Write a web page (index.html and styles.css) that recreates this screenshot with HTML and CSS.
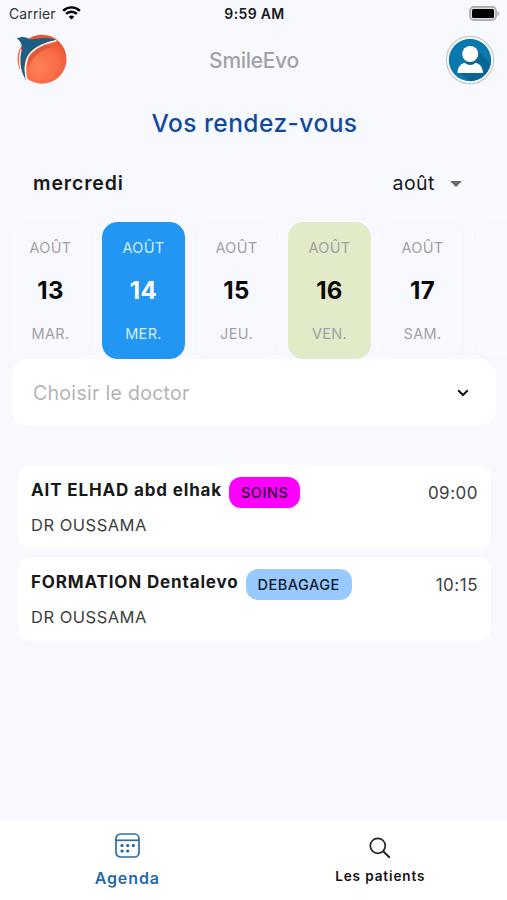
FILE: index.html
```html
<!DOCTYPE html>
<html lang="fr">
<head>
<meta charset="utf-8">
<title>SmileEvo</title>
<link rel="stylesheet" href="styles.css">
</head>
<body>
<div class="status">
  <div class="carrier"><span>Carrier</span>
    <svg width="19" height="14" viewBox="0 0 19 14"><path d="M9.5 13.6 6.7 10.8a4 4 0 0 1 5.6 0Z"/><path class="arc" d="M4.1 7.9a7.7 7.7 0 0 1 10.8 0M1.2 4.8a11.8 11.8 0 0 1 16.6 0"/></svg>
  </div>
  <div class="clock">9:59 AM</div>
  <svg class="battery" width="31" height="15" viewBox="0 0 31 15"><rect x=".9" y=".9" width="26.2" height="13.2" rx="4" fill="#ddd" stroke="#aaa" stroke-width="1.6"/><rect x="3" y="3" width="22" height="9" rx="1.5"/><path d="M28.5 5.2c2.2.7 2.2 3.9 0 4.6Z" fill="#aaa"/></svg>
</div>
<header class="header">
  <svg class="logo" width="52" height="52" viewBox="0 0 52 52">
    <defs><radialGradient id="ball" cx=".45" cy=".65" r=".65"><stop offset="0" stop-color="#ff8055"/><stop offset=".6" stop-color="#f96c45"/><stop offset="1" stop-color="#e9512f"/></radialGradient></defs>
    <circle cx="26" cy="25.200" r="24.500" fill="url(#ball)"/>
    <path d="M12 37C14 23 26 16 38 12L25 11 12 22Z" fill="#c94c35" opacity=".6"/>
    <path d="M10.500 47.500C2.500 35 3.500 23 6 14.500 6 9.500 4 6.500 .8 4.500 5 2.500 10 2.300 13.500 5.500 19 5.500 31 2 39.500 6 27 8.500 14.500 14.500 10.500 24 7.500 31 8.500 40 10.500 47.500Z" fill="#1d5f80"/>
    <path d="M40.500 6.700C27 9.300 15 15.500 11.300 24.500 8.500 31.500 9 40 11.300 48" fill="none" stroke="#fff" stroke-width="1.500"/>
    <path d="M5 15.500C2.700 24 3 36 9 46" fill="none" stroke="#fff" stroke-width="1.200"/>
  </svg>
  <div class="brand">SmileEvo</div>
  <svg class="avatar" width="50" height="50" viewBox="0 0 50 50">
    <circle cx="25" cy="25" r="23.600" fill="#fff" stroke="#c9c9cd" stroke-width="1.300"/>
    <circle cx="25" cy="25" r="21.200" fill="#0878ad"/>
    <path d="M31 14 45.500 29A21 21 0 0 1 25 46L14 37Z" fill="#0b6594"/>
    <circle cx="25.200" cy="19" r="8" fill="#fff"/><path d="M12.500 38c.3-6 2.600-9 7.500-10.300 2.800 3 7.600 3 10.400 0C35.300 29 37.700 32 38 38Z" fill="#fff"/>
  </svg>
</header>
<h1 class="title">Vos rendez-vous</h1>
<div class="month-row"><strong>mercredi</strong><div class="month"><span>août</span><svg width="12" height="6" viewBox="0 0 12 6"><path d="M0 0h12L6 6Z" fill="#686970"/></svg></div></div>
<div class="days">
  <div class="day"><span>AOÛT</span><b>13</b><span>MAR.</span></div>
  <div class="day selected"><span>AOÛT</span><b>14</b><span>MER.</span></div>
  <div class="day"><span>AOÛT</span><b>15</b><span>JEU.</span></div>
  <div class="day green"><span>AOÛT</span><b>16</b><span>VEN.</span></div>
  <div class="day"><span>AOÛT</span><b>17</b><span>SAM.</span></div>
  <div class="day"></div>
</div>
<div class="select"><span>Choisir le doctor</span><svg width="12" height="8" viewBox="0 0 12 8"><path d="M1.200 1.200 6 6l4.800-4.800" fill="none" stroke="#151515" stroke-width="2"/></svg></div>
<main class="list">
  <article class="card"><div class="info"><div class="line"><strong>AIT ELHAD abd elhak</strong><span class="tag pink">SOINS</span></div><div class="doctor">DR OUSSAMA</div></div><time>09:00</time></article>
  <article class="card"><div class="info"><div class="line"><strong>FORMATION Dentalevo</strong><span class="tag blue">DEBAGAGE</span></div><div class="doctor">DR OUSSAMA</div></div><time>10:15</time></article>
</main>
<nav class="nav">
  <div class="tab active"><svg width="25" height="25" viewBox="0 0 25 25"><rect x="1" y="1" width="23" height="23" rx="4.500" fill="none" stroke="#2a6eae" stroke-width="1.700"/><path d="M1 7.300h23" stroke="#2a6eae" stroke-width="1.700"/><g fill="#1f5fa5"><circle cx="7" cy="12.500" r="1.600"/><circle cx="12.700" cy="12.500" r="1.600"/><circle cx="18.300" cy="12.500" r="1.600"/><circle cx="7" cy="18" r="1.600"/><circle cx="12.700" cy="18" r="1.600"/></g></svg><span>Agenda</span></div>
  <div class="tab search"><svg width="22" height="22" viewBox="0 0 22 22" fill="none" stroke="#252525" stroke-width="1.700"><circle cx="8.800" cy="8.800" r="7.500"/><path d="m14.200 14.200 6.600 6.600" stroke-width="2"/></svg><span>Les patients</span></div>
</nav>
</body>
</html>
```
FILE: styles.css
```css
* { box-sizing: border-box; }
body { margin: 0; width: 507px; height: 900px; overflow: hidden; background: #f8f9fe; font-family: Inter, "Liberation Sans", sans-serif; color: #17181a; display: flex; flex-direction: column; }
svg { display: block; flex: none; }
.status { height: 28px; display: grid; grid-template-columns: 1fr auto 1fr; align-items: center; padding: 0 7px 0 9px; }
.carrier { display: flex; align-items: center; gap: 6px; font-size: 14px; letter-spacing: .1px; color: #303134; }
.carrier .arc { fill: none; stroke: #000; stroke-width: 2.4; }
.carrier span, .clock { margin-top: -1px; }
.carrier svg { margin-top: -3px; }
.clock { font-size: 14px; font-weight: 600; letter-spacing: .35px; }
.battery { justify-self: end; margin-top: -2px; }
.header { height: 66px; display: flex; justify-content: space-between; padding: 6px 12px 0 16px; }
.avatar { margin-top: 1px; }
.brand { font-size: 21px; font-weight: 500; color: #a1a2a5; line-height: 54px; letter-spacing: -.3px; margin-right: 5px; }
.title { margin: 0; height: 58px; line-height: 59px; text-align: center; font-size: 24.5px; font-weight: 500; letter-spacing: .45px; color: #1249a0; padding-left: 2px; }
.month-row { height: 70px; display: flex; justify-content: space-between; align-items: flex-start; padding: 18px 45px 0 33px; font-size: 19.5px; line-height: 27px; }
.month-row strong { font-weight: 600; letter-spacing: .85px; }
.month { display: flex; align-items: center; gap: 15px; letter-spacing: .5px; }
.days { height: 137px; display: flex; gap: 10px; padding-left: 9px; overflow: hidden; }
.day { width: 83px; height: 137px; flex: none; border: 1px solid #f5f6fa; border-radius: 15px; display: flex; flex-direction: column; align-items: center; padding: 16px 0 15px; font-size: 14.5px; letter-spacing: .35px; color: #a0a1a5; }
.day span { line-height: 18px; }
.day b { font-size: 24px; line-height: 30px; margin: 19px 0 19px; font-weight: 700; letter-spacing: .4px; color: #080808; }
.day.selected { background: #2196f3; border-color: #2196f3; color: #d9edff; }
.day.selected b { color: #fff; }
.day.green { background: #e1ebc8; border-color: #e1ebc8; }
.select { margin: 0 11px 0 12px; height: 67px; background: #fff; border-radius: 17px; display: flex; justify-content: space-between; align-items: center; padding: 0 27px 0 21px; color: #b4b4b6; font-size: 19.500px; letter-spacing: .3px; }
.list { margin: 39px 16px 0 18px; display: flex; flex-direction: column; gap: 8px; }
.card { height: 84px; background: #fff; border-radius: 12px; padding: 12px 13px; display: flex; justify-content: space-between; }
.line { height: 31px; display: flex; gap: 7px; }
.line strong { font-size: 17px; line-height: 26px; letter-spacing: .85px; font-weight: 700; white-space: nowrap; }
.tag { height: 31px; line-height: 31px; border-radius: 12px; padding: 0 12px; font-size: 14.500px; font-weight: 500; letter-spacing: .5px; }
.pink { background: #f0f; color: #320035; }
.blue { background: #99caff; color: #111c2c; }
.doctor { margin-top: 5px; line-height: 24px; font-size: 16.500px; letter-spacing: .5px; color: #3d3e40; }
time { line-height: 33px; font-size: 17px; letter-spacing: .5px; color: #3d3e40; }
.nav { height: 80px; margin-top: auto; background: #fff; display: grid; grid-template-columns: 1fr 1fr; }
.tab { display: flex; flex-direction: column; align-items: center; font-weight: 600; }
.tab.active { padding: 13px 0 0 1px; gap: 10px; font-size: 16px; letter-spacing: .9px; color: #246aa8; line-height: 20px; }
.tab.search { padding-top: 17px; gap: 8px; font-size: 13.5px; letter-spacing: .9px; line-height: 18px; color: #111; }
```
